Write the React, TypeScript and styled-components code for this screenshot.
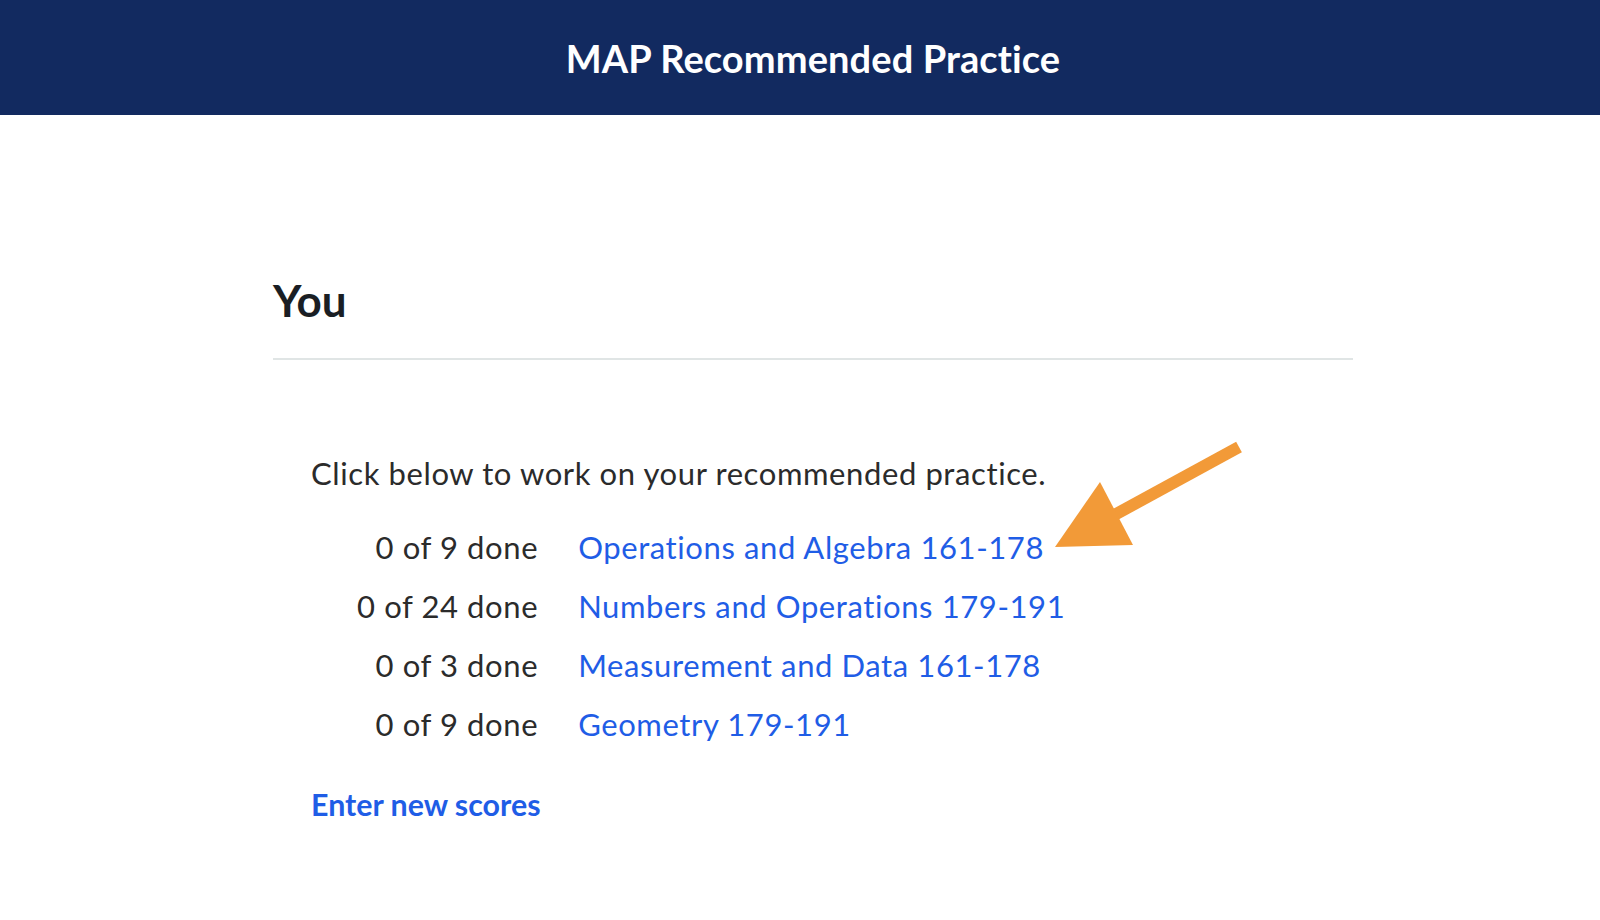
import styled, { createGlobalStyle } from "styled-components"

const GlobalStyle = createGlobalStyle`
  html, body {
    margin: 0;
    padding: 0;
    background: #fff;
    font-family: Lato, "Open Sans", sans-serif;
    color: #2b2b2b;
  }
`

type Practice = {
  done: number
  total: number
  title: string
}

const practices: Practice[] = [
  { done: 0, total: 9, title: "Operations and Algebra 161-178" },
  { done: 0, total: 24, title: "Numbers and Operations 179-191" },
  { done: 0, total: 3, title: "Measurement and Data 161-178" },
  { done: 0, total: 9, title: "Geometry 179-191" }
]

const Arrow = () => (
  <svg width="200" height="120" viewBox="0 0 200 120" aria-hidden="true">
    <line x1="187" y1="6" x2="55" y2="78" stroke="#f29a38" strokeWidth="12" />
    <polygon points="3,106 48,41 81,104" fill="#f29a38" />
  </svg>
)

const App = () => {
  return (
    <>
      <GlobalStyle />
      <Header>
        <h1>MAP Recommended Practice</h1>
      </Header>
      <Main>
        <Container>
          <Title>You</Title>
          <Divider />
          <Body>
            <Intro>Click below to work on your recommended practice.</Intro>
            <List>
              {practices.map((p, i) => (
                <Row key={p.title}>
                  <Status>
                    {p.done} of {p.total} done
                  </Status>
                  <LinkCell>
                    <PracticeLink href="#">{p.title}</PracticeLink>
                    {i === 0 && (
                      <ArrowWrap>
                        <Arrow />
                      </ArrowWrap>
                    )}
                  </LinkCell>
                </Row>
              ))}
            </List>
            <ScoresLink href="#">Enter new scores</ScoresLink>
          </Body>
        </Container>
      </Main>
    </>
  )
}

const Header = styled.header`
  display: flex;
  align-items: center;
  justify-content: center;
  height: 115px;
  padding-left: 26px;
  background-color: #122a60;

  h1 {
    margin: 0;
    color: #fff;
    font-size: 38px;
    font-weight: 700;
    letter-spacing: 0.1px;
  }
`

const Main = styled.main`
  padding-left: 26px;
`

const Container = styled.div`
  width: 1080px;
  margin: 0 auto;
  padding-top: 159px;
`

const Title = styled.h2`
  margin: 0;
  font-size: 44px;
  line-height: 1.2;
  font-weight: 700;
  color: #1a1e24;
`

const Divider = styled.hr`
  margin: 31px 0 0;
  border: none;
  height: 2px;
  background-color: #e0e5e5;
`

const Body = styled.section`
  display: flex;
  flex-direction: column;
  align-items: flex-start;
  padding: 95px 0 0 38px;
  font-size: 31px;
  line-height: 36px;
  letter-spacing: 0.6px;
`

const Intro = styled.p`
  margin: 0;
`

const List = styled.div`
  display: grid;
  grid-template-columns: max-content max-content;
  column-gap: 40px;
  row-gap: 23px;
  margin: 38px 0 0 46px;
`

const Row = styled.div`
  display: contents;
`

const Status = styled.span`
  text-align: right;
`

const LinkCell = styled.span`
  position: relative;
  justify-self: start;
`

const PracticeLink = styled.a`
  color: #1f5de6;
  text-decoration: none;
`

const ArrowWrap = styled.span`
  position: absolute;
  left: 100%;
  top: -88px;
  margin-left: 8px;
  pointer-events: none;
`

const ScoresLink = styled.a`
  margin-top: 44px;
  color: #1f5de6;
  font-size: 30.4px;
  font-weight: 700;
  letter-spacing: 0;
  text-decoration: none;
`

export default App
